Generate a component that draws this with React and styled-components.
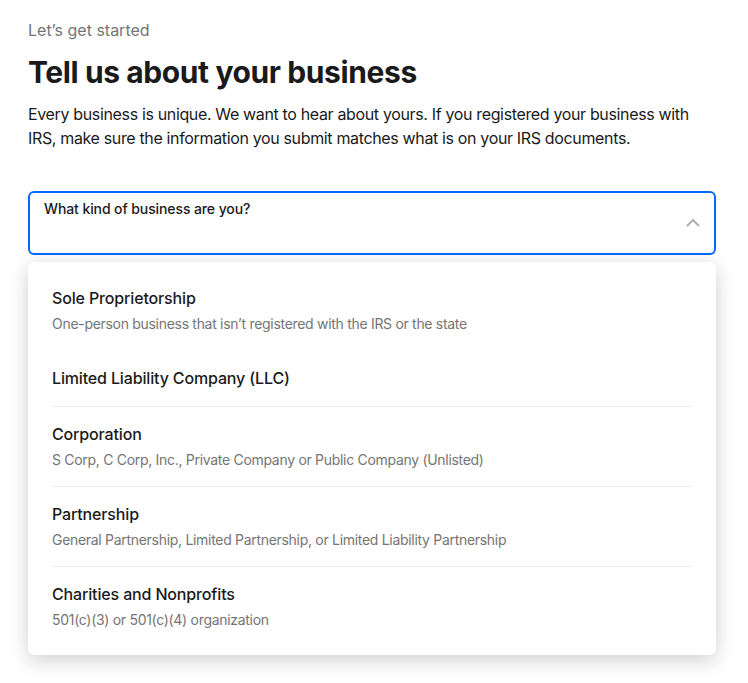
import React from "react";
import styled, { createGlobalStyle } from "styled-components";

const Global = createGlobalStyle`
  html, body { margin: 0; padding: 0; background: #ffffff; }
  body { font-family: Inter, "Noto Sans", sans-serif; color: #1a1a1a; -webkit-font-smoothing: antialiased; }
`;

const Page = styled.div`
  padding: 18px 32px 40px 28px;
  display: flex;
  flex-direction: column;
`;

const Eyebrow = styled.div`
  font-size: 16px;
  line-height: 24px;
  color: #757575;
`;

const Title = styled.h1`
  margin: 12px 0 12px;
  font-size: 30px;
  line-height: 36px;
  font-weight: 700;
  letter-spacing: -0.4px;
  color: #1a1a1a;
`;

const Lead = styled.p`
  margin: 0;
  font-size: 16px;
  line-height: 24px;
  letter-spacing: -0.35px;
  color: #1a1a1a;
`;

const Field = styled.div`
  margin-top: 41px;
  position: relative;
`;

const SelectBox = styled.div`
  height: 64px;
  box-sizing: border-box;
  border: 2px solid #006aff;
  border-radius: 6px;
  padding: 6px 14px;
  display: flex;
  justify-content: space-between;
  align-items: flex-start;
  background: #fff;
`;

const Label = styled.div`
  font-size: 14px;
  line-height: 20px;
  font-weight: 500;
  letter-spacing: -0.1px;
  color: #1a1a1a;
`;

const Chevron = styled.svg`
  align-self: center;
  width: 14px;
  height: 14px;
`;

const Menu = styled.ul`
  list-style: none;
  margin: 7px 0 0;
  padding: 8px 24px 9px;
  background: #fff;
  border-radius: 6px;
  box-shadow: 0 0 20px rgba(0, 0, 0, 0.08), 0 8px 20px rgba(0, 0, 0, 0.12);
`;

const Item = styled.li`
  padding: 15px 0 16px;
  border-top: 1px solid ${(p) => (p.$divider ? "#ececec" : "transparent")};
  display: flex;
  flex-direction: column;
  gap: 4px;
`;

const ItemTitle = styled.div`
  font-size: 16px;
  line-height: 24px;
  font-weight: 500;
  letter-spacing: -0.15px;
  color: #1a1a1a;
`;

const ItemSub = styled.div`
  font-size: 14px;
  line-height: 20px;
  letter-spacing: -0.3px;
  color: #757575;
`;

const options = [
  { title: "Sole Proprietorship", sub: "One-person business that isn’t registered with the IRS or the state" },
  { title: "Limited Liability Company (LLC)" },
  { title: "Corporation", sub: "S Corp, C Corp, Inc., Private Company or Public Company (Unlisted)", divider: true },
  { title: "Partnership", sub: "General Partnership, Limited Partnership, or Limited Liability Partnership", divider: true },
  { title: "Charities and Nonprofits", sub: "501(c)(3) or 501(c)(4) organization", divider: true },
];

export default function App() {
  return (
    <Page>
      <Global />
      <Eyebrow>Let’s get started</Eyebrow>
      <Title>Tell us about your business</Title>
      <Lead>
        Every business is unique. We want to hear about yours. If you registered your business with
        IRS, make sure the information you submit matches what is on your IRS documents.
      </Lead>
      <Field>
        <SelectBox>
          <Label>What kind of business are you?</Label>
          <Chevron viewBox="0 0 14 14" fill="none">
            <path d="M1.5 9.5 L7 4 L12.5 9.5" stroke="#adadad" strokeWidth="1.8" strokeLinecap="round" strokeLinejoin="round" />
          </Chevron>
        </SelectBox>
        <Menu>
          {options.map((o) => (
            <Item key={o.title} $divider={o.divider}>
              <ItemTitle>{o.title}</ItemTitle>
              {o.sub && <ItemSub>{o.sub}</ItemSub>}
            </Item>
          ))}
        </Menu>
      </Field>
    </Page>
  );
}
